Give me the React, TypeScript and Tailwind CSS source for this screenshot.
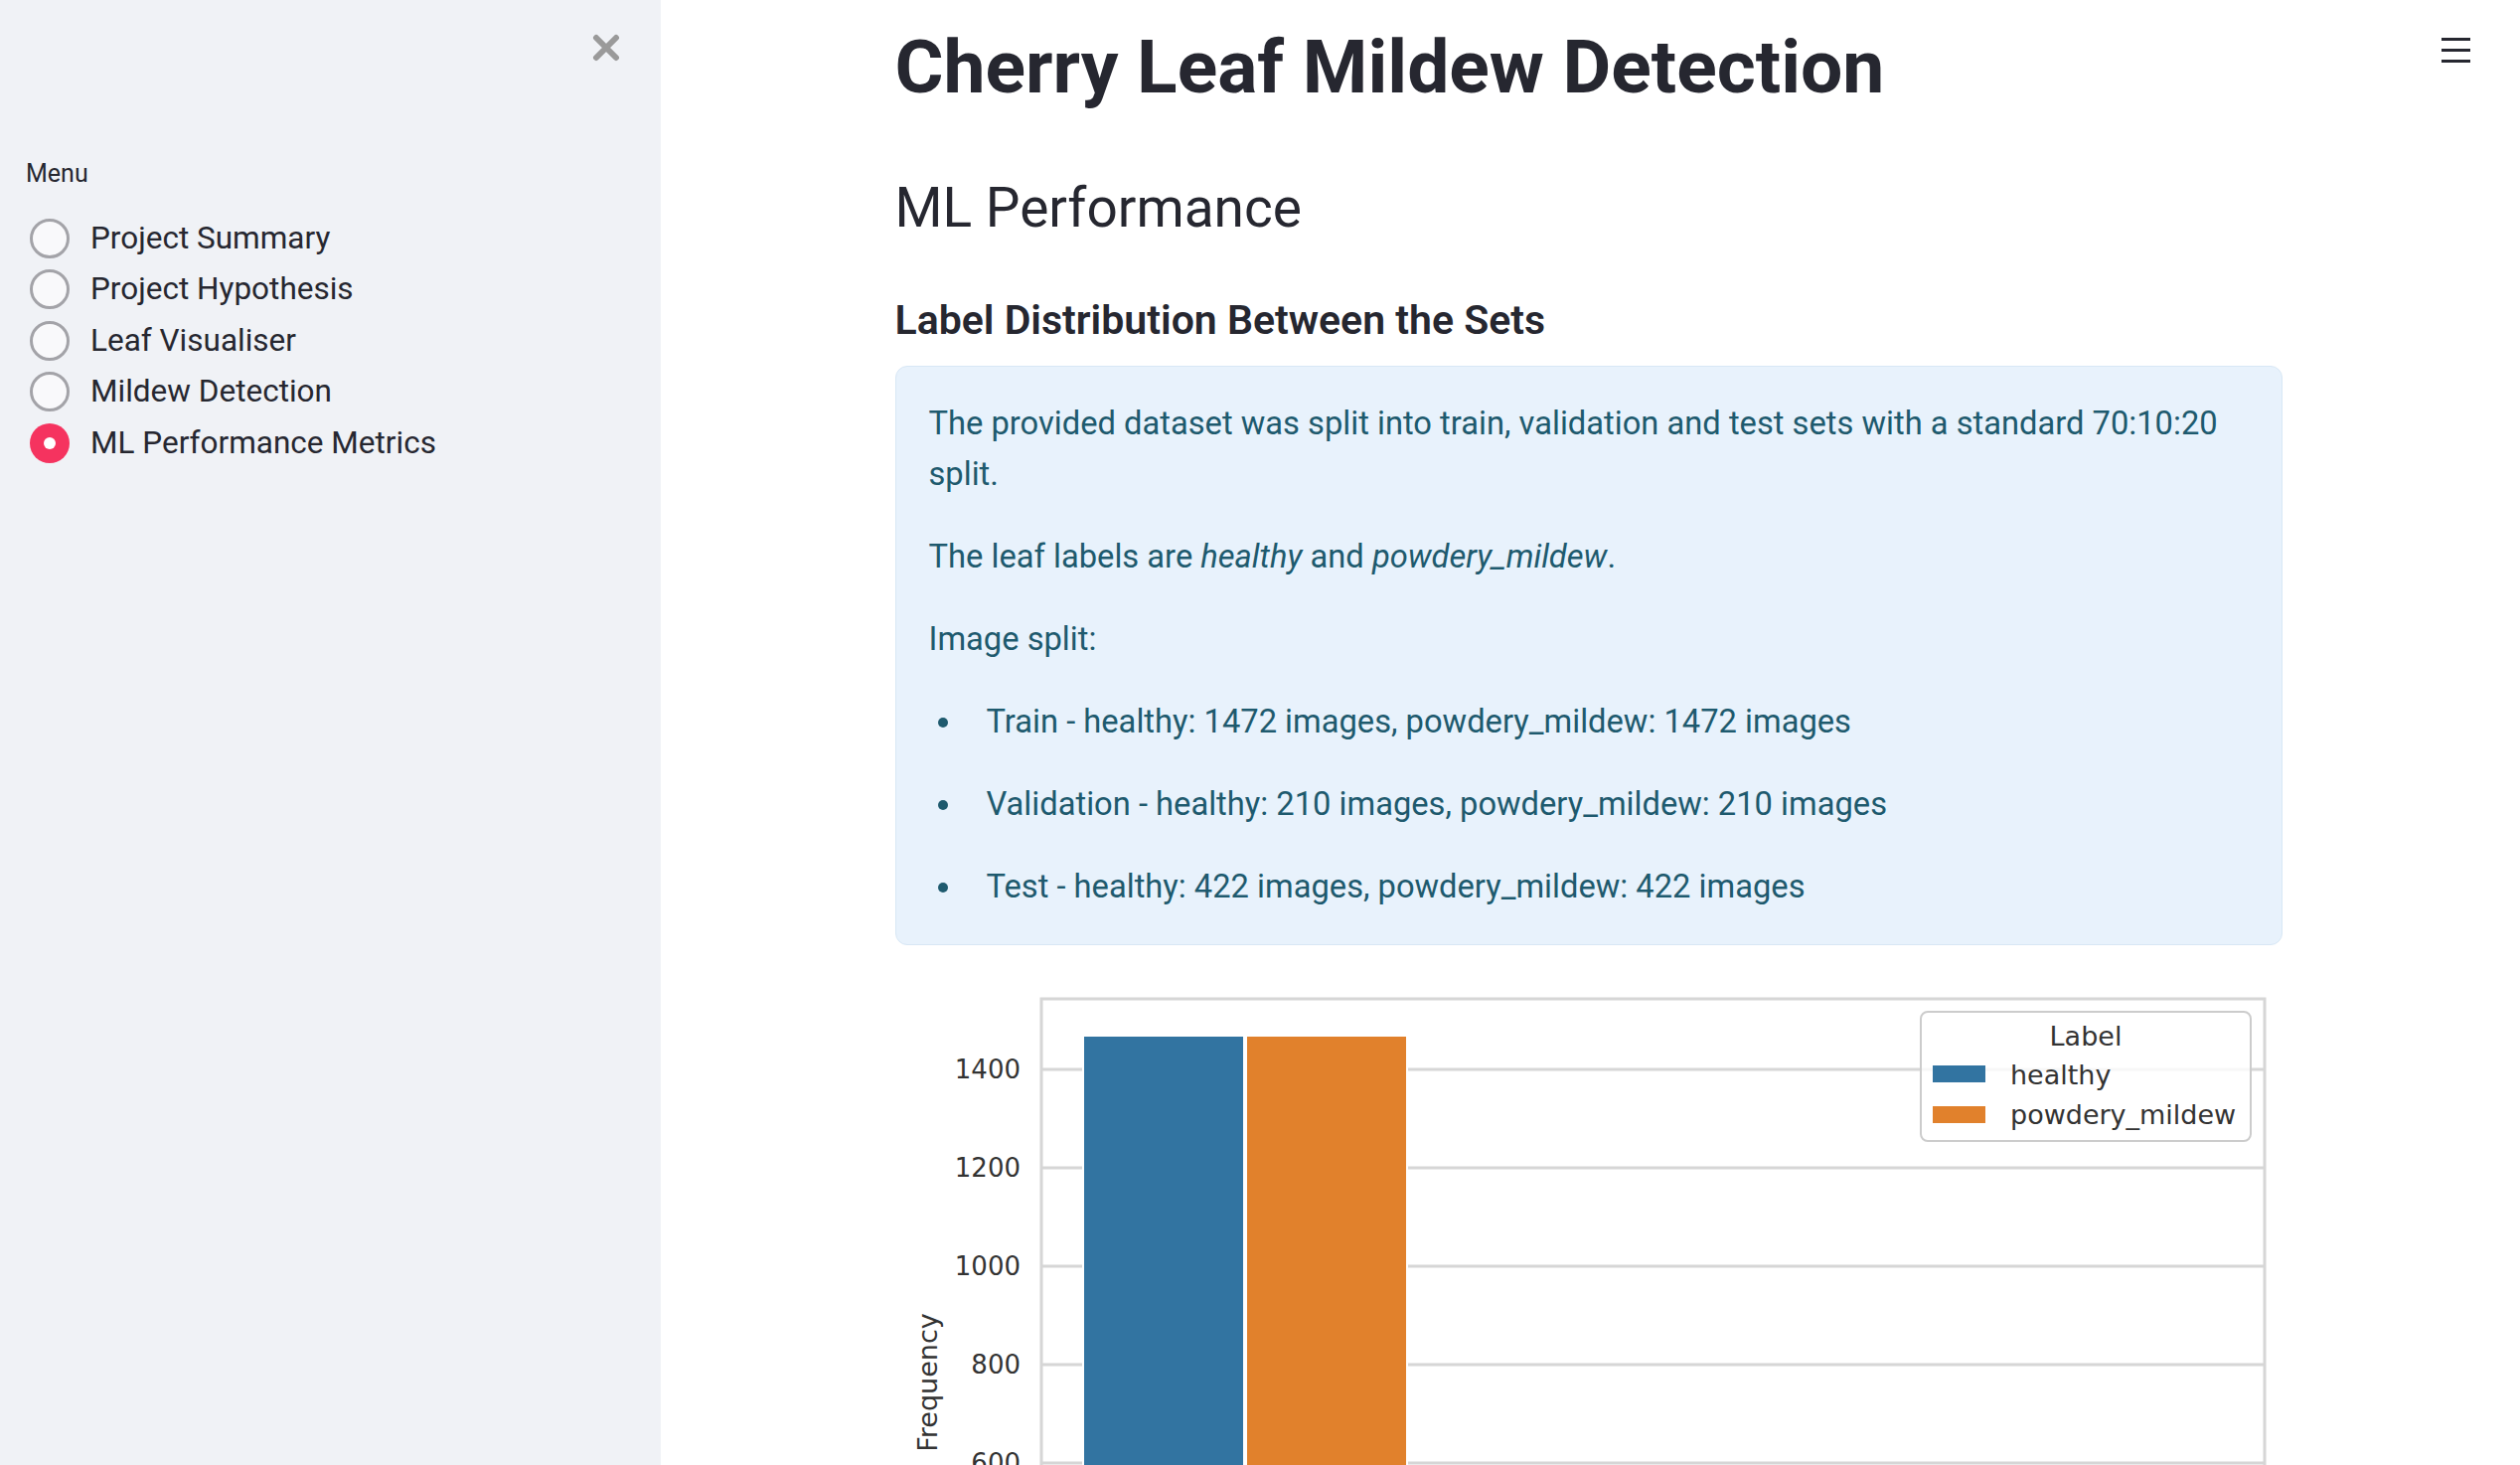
const navItems = [
  "Project Summary",
  "Project Hypothesis",
  "Leaf Visualiser",
  "Mildew Detection",
  "ML Performance Metrics",
];

const splits = [
  "Train - healthy: 1472 images, powdery_mildew: 1472 images",
  "Validation - healthy: 210 images, powdery_mildew: 210 images",
  "Test - healthy: 422 images, powdery_mildew: 422 images",
];

const ticks = [
  { label: "1400", y: 93 },
  { label: "1200", y: 192 },
  { label: "1000", y: 291 },
  { label: "800", y: 390 },
  { label: "600", y: 489 },
];

const Sidebar = () => {
  return (
    <aside className="w-[665px] shrink-0 h-full bg-[#f0f2f6] pt-[34px] px-[26px]">
      <div className="flex justify-end pr-[15px]">
        <svg width="28" height="28" viewBox="0 0 28 28">
          <path d="M4 4 L24 24 M24 4 L4 24" stroke="#9a9a9a" strokeWidth="6" strokeLinecap="round" />
        </svg>
      </div>
      <div className="mt-[98px] text-[25px] leading-[30px] text-[#262730]">Menu</div>
      <div className="mt-[24px] flex flex-col">
        {navItems.map((item, i) => {
          const active = i === navItems.length - 1;
          return (
            <div key={item} className="h-[51.5px] flex items-center gap-[21px] pl-[4px]">
              {active ? (
                <div className="w-[40px] h-[40px] rounded-full bg-[#f5335f] flex items-center justify-center">
                  <div className="w-[12px] h-[12px] rounded-full bg-white" />
                </div>
              ) : (
                <div className="w-[40px] h-[40px] rounded-full border-[3px] border-[#a3a3a8] bg-[#f9f9fb]" />
              )}
              <span className="text-[31.5px] leading-[40px] text-[#262730]">{item}</span>
            </div>
          );
        })}
      </div>
    </aside>
  );
};

const Chart = () => {
  return (
    <svg width="1396" height="600" viewBox="0 0 1396 600" className="mt-[32px] block">
      {/* axes frame */}
      <rect x="147" y="22" width="1231" height="570" fill="white" stroke="#d6d6d6" strokeWidth="3" />
      {ticks.map((t) => (
        <g key={t.label}>
          <line x1="147" x2="1378" y1={t.y} y2={t.y} stroke="#d6d6d6" strokeWidth="3" />
          <text
            x="126"
            y={t.y}
            textAnchor="end"
            dominantBaseline="central"
            fontFamily="DejaVu Sans, sans-serif"
            fontSize="26"
            fill="#333333"
          >
            {t.label}
          </text>
        </g>
      ))}
      <text
        x="32"
        y="408"
        transform="rotate(-90 32 408)"
        textAnchor="middle"
        dominantBaseline="central"
        fontFamily="DejaVu Sans, sans-serif"
        fontSize="27"
        fill="#333333"
      >
        Frequency
      </text>
      {/* bars */}
      <rect x="189" y="59" width="162" height="560" fill="#3274a1" stroke="white" strokeWidth="2" />
      <rect x="353" y="59" width="162" height="560" fill="#e1812c" stroke="white" strokeWidth="2" />
      {/* legend */}
      <rect x="1032" y="35" width="332" height="130" rx="7" fill="white" fillOpacity="0.8" stroke="#cccccc" strokeWidth="2" />
      <text x="1198" y="59" textAnchor="middle" dominantBaseline="central" fontFamily="DejaVu Sans, sans-serif" fontSize="27" fill="#333333">
        Label
      </text>
      <rect x="1044" y="89" width="53" height="17" fill="#3274a1" />
      <text x="1122" y="98" dominantBaseline="central" fontFamily="DejaVu Sans, sans-serif" fontSize="27" fill="#333333">
        healthy
      </text>
      <rect x="1044" y="130" width="53" height="17" fill="#e1812c" />
      <text x="1122" y="138" dominantBaseline="central" fontFamily="DejaVu Sans, sans-serif" fontSize="27" fill="#333333">
        powdery_mildew
      </text>
    </svg>
  );
};

export default function App() {
  return (
    <div className="h-screen w-full flex overflow-hidden bg-white font-['Roboto',sans-serif]">
      <Sidebar />
      <main className="relative flex-1 h-full overflow-hidden">
        {/* hamburger menu */}
        <div className="absolute top-[38px] right-[50px] w-[29px] flex flex-col gap-[8px]">
          <div className="h-[3px] bg-[#262730]" />
          <div className="h-[3px] bg-[#262730]" />
          <div className="h-[3px] bg-[#262730]" />
        </div>

        <div className="mx-auto w-[1396px] -translate-x-[2px] pt-[22px] text-[#262730]">
          <h1 className="text-[75px] leading-[90px] font-bold">Cherry Leaf Mildew Detection</h1>
          <h2 className="mt-[64px] text-[55px] leading-[66px] font-normal">ML Performance</h2>
          <h3 className="mt-[56px] text-[41px] leading-[48px] font-semibold">Label Distribution Between the Sets</h3>

          <div className="mt-[22px] rounded-[12px] border border-[#d8e7f5] bg-[#e8f2fc] px-[33px] py-[32px] text-[32.7px] leading-[51px] text-[#1e5a6e]">
            <div className="flex flex-col gap-[32px]">
              <p>
                The provided dataset was split into train, validation and test sets with a standard 70:10:20
                <br />
                split.
              </p>
              <p>
                The leaf labels are <em>healthy</em> and <em>powdery_mildew</em>.
              </p>
              <p>Image split:</p>
              {splits.map((s) => (
                <div key={s} className="flex items-center">
                  <div className="w-[58px] flex pl-[9px]">
                    <span className="w-[10px] h-[10px] rounded-full bg-[#1e5a6e]" />
                  </div>
                  <span>{s}</span>
                </div>
              ))}
            </div>
          </div>

          <Chart />
        </div>
      </main>
    </div>
  );
}
